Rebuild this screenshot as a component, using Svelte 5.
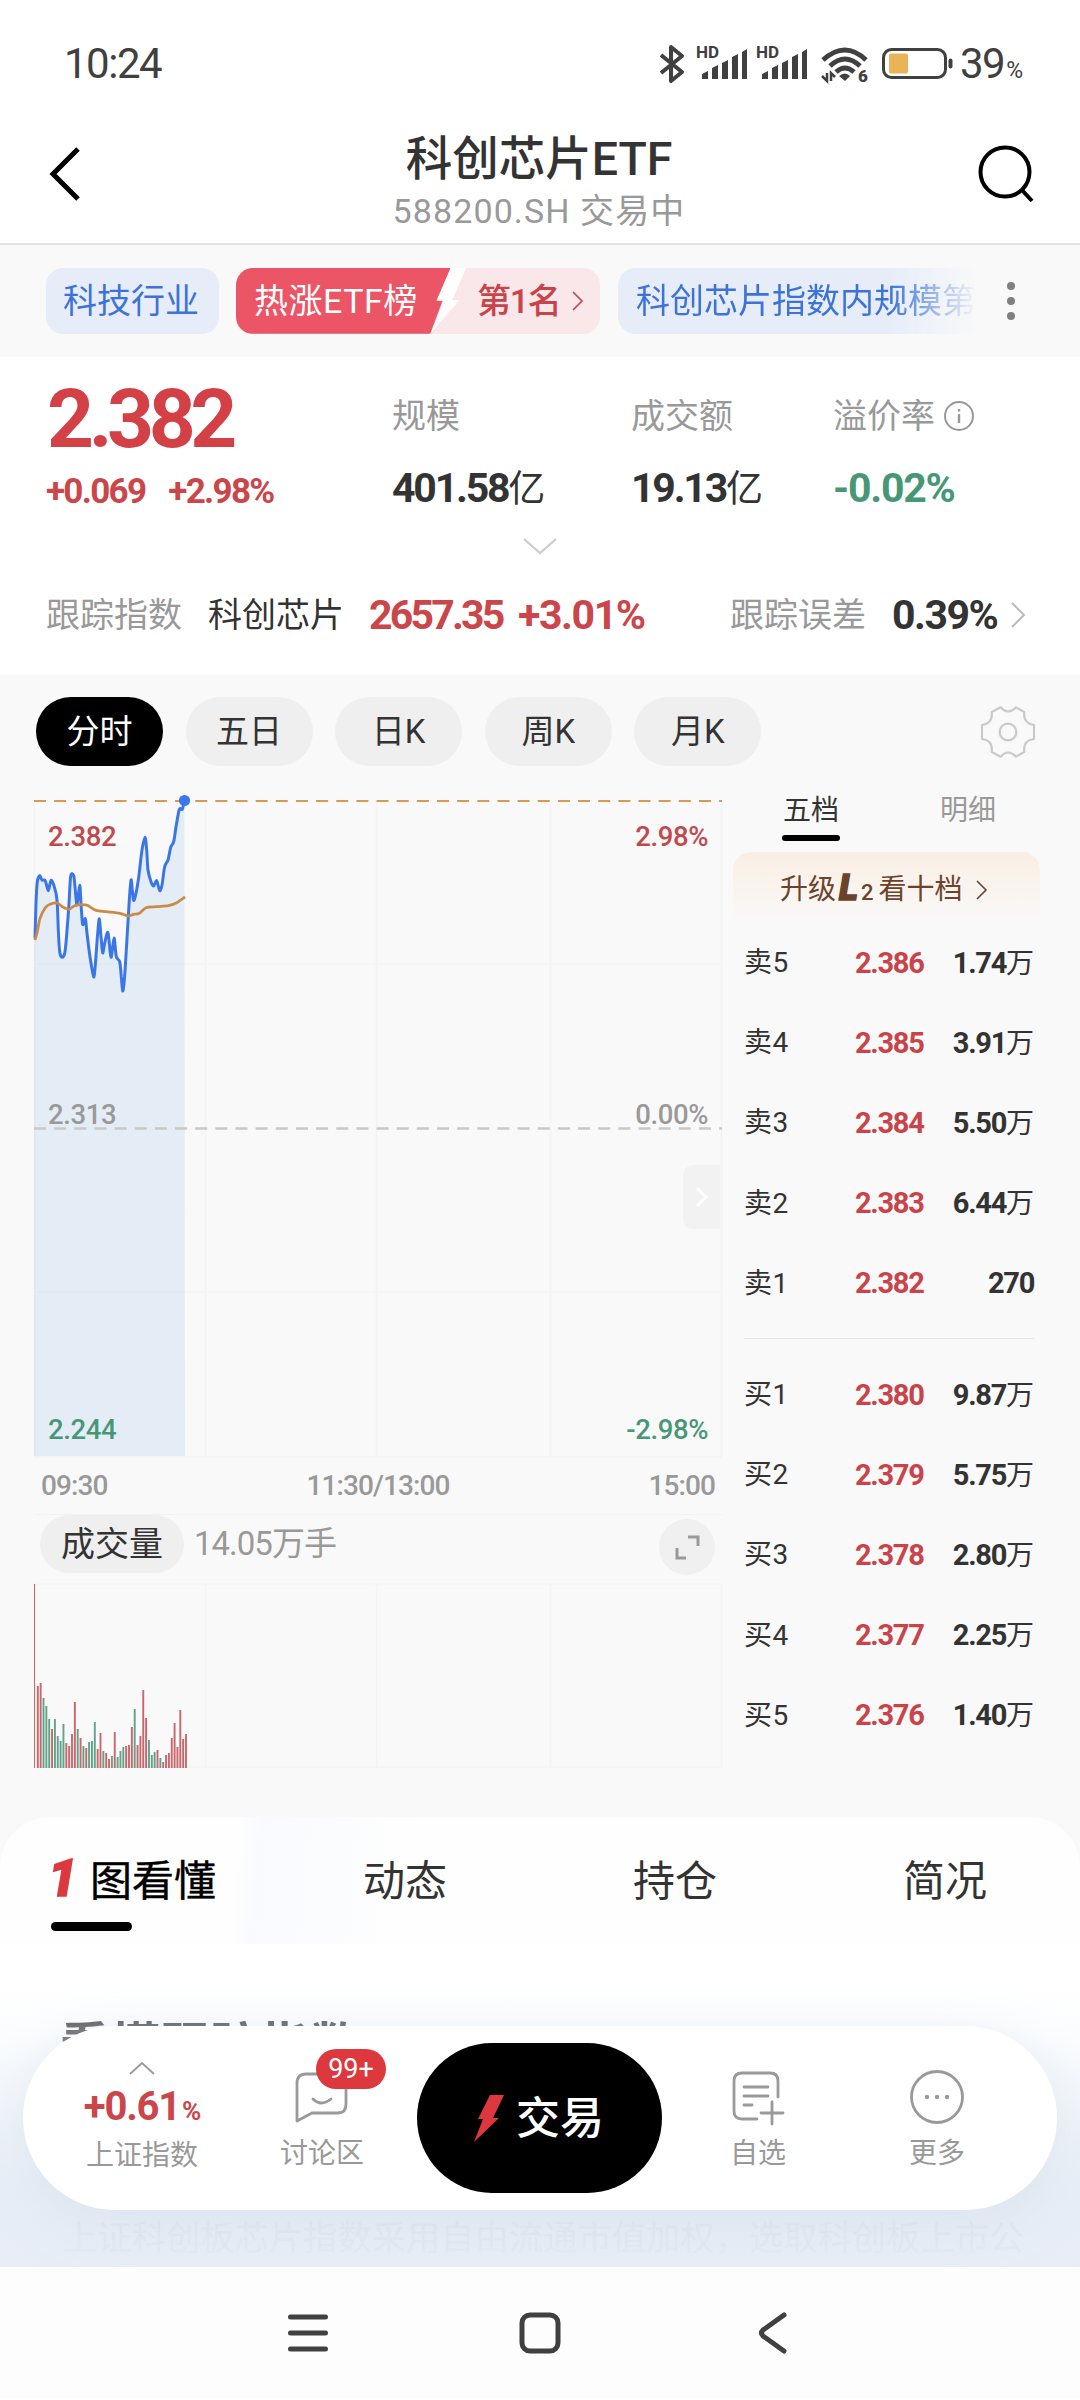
<script lang="ts">
	type Point = [number, number];

	const periods = ['分时', '五日', '日K', '周K', '月K'];
	const pages = ['图看懂', '动态', '持仓', '简况'];

	const sells = [
		{ label: '卖5', price: '2.386', amount: '1.74', unit: '万' },
		{ label: '卖4', price: '2.385', amount: '3.91', unit: '万' },
		{ label: '卖3', price: '2.384', amount: '5.50', unit: '万' },
		{ label: '卖2', price: '2.383', amount: '6.44', unit: '万' },
		{ label: '卖1', price: '2.382', amount: '270', unit: '' }
	];
	const buys = [
		{ label: '买1', price: '2.380', amount: '9.87', unit: '万' },
		{ label: '买2', price: '2.379', amount: '5.75', unit: '万' },
		{ label: '买3', price: '2.378', amount: '2.80', unit: '万' },
		{ label: '买4', price: '2.377', amount: '2.25', unit: '万' },
		{ label: '买5', price: '2.376', amount: '1.40', unit: '万' }
	];

	// price and average lines, in thirds of a pixel
	const price: Point[] = [
		[3, 415], [6, 310], [10, 245], [17, 227], [24, 240], [34, 242], [43, 272], [51, 241], [61, 260],
		[69, 300], [73, 390], [77, 455], [85, 472], [93, 455], [100, 380], [105, 310], [110, 228], [119, 227],
		[123, 260], [129, 315], [137, 256], [141, 310], [146, 373], [154, 356], [159, 400], [168, 470],
		[179, 531], [185, 480], [191, 400], [196, 356], [201, 410], [206, 459], [213, 425], [222, 398],
		[231, 472], [240, 414], [247, 470], [257, 485], [262, 530], [266, 573], [271, 540], [277, 450],
		[284, 330], [291, 241], [295, 270], [300, 301], [313, 240], [324, 150], [333, 112], [338, 150],
		[342, 210], [351, 245], [359, 258], [368, 242], [377, 272], [384, 255], [392, 200], [402, 180],
		[410, 142], [419, 125], [427, 75], [436, 28], [445, 28], [451, 2]
	];
	const average: Point[] = [
		[3, 420], [10, 395], [18, 355], [34, 323], [48, 313], [70, 309], [86, 321], [105, 328], [120, 318],
		[138, 314], [160, 316], [186, 331], [218, 335], [258, 340], [283, 348], [298, 343], [316, 340],
		[336, 323], [368, 320], [403, 317], [428, 308], [453, 291]
	];

	// volume per minute, r = up, g = down
	const volumes =
		'r184 r82 r85 g70 g62 g49 r39 g49 g32 g27 g44 r25 r22 r34 r66 g39 r30 g22 r20 g26 g27 g46 r19 r35 g17 r15 r9 g12 r36 g11 g17 g21 r22 r23 r41 g59 r23 r32 r78 r50 g28 g13 g16 r18 g10 r6 r13 r15 r30 r45 r21 r58 r29 r34'
			.split(' ')
			.map((v) => ({ up: v[0] === 'r', h: +v.slice(1) }));

	function smooth(points: Point[]) {
		const p = points.map(([x, y]) => [x / 3, y / 3]);
		let d = `M${p[0][0].toFixed(1)} ${p[0][1].toFixed(1)}`;
		for (let i = 0; i < p.length - 1; i++) {
			const a = p[i - 1] || p[i];
			const b = p[i];
			const c = p[i + 1];
			const e = p[i + 2] || c;
			const k = 7;
			d += `C${(b[0] + (c[0] - a[0]) / k).toFixed(1)} ${(b[1] + (c[1] - a[1]) / k).toFixed(1)} `;
			d += `${(c[0] - (e[0] - b[0]) / k).toFixed(1)} ${(c[1] - (e[1] - b[1]) / k).toFixed(1)} `;
			d += `${c[0].toFixed(1)} ${c[1].toFixed(1)}`;
		}
		return d;
	}

	const priceLine = smooth(price);
	const averageLine = smooth(average);
</script>

{#snippet level(row)}
	<div class="level">
		<span class="level-name">{row.label}</span>
		<b class="level-price">{row.price}</b>
		<span class="level-amount"><b>{row.amount}</b>{row.unit}</span>
	</div>
{/snippet}

{#snippet signal()}
	<svg class="signal" width="52" height="40" viewBox="0 0 52 40">
		<text x="0" y="14">HD</text>
		<path d="M6 35V30L12 27V35ZM16 35V24L22 21V35ZM26 35V19L32 16V35ZM36 35V13L42 10V35ZM46 35V8L51 5V35Z" fill="#404040" />
	</svg>
{/snippet}

<main>
	<div class="status">
		<span class="clock">10:24</span>
		<div class="status-icons">
			<svg class="bluetooth" width="26" height="40" viewBox="0 0 26 40">
				<path d="M2 11L23 28L12 37V3L23 12L2 29" fill="none" stroke="#404040" stroke-width="4" stroke-linejoin="round" />
			</svg>
			{@render signal()}
			{@render signal()}
			<svg class="wifi" width="48" height="40" viewBox="0 0 48 40">
				<g fill="none" stroke="#404040" stroke-width="5">
					<path d="M2 16Q24 -4 45 16" />
					<path d="M9 22Q24 8 39 22" />
					<path d="M15 28Q24 20 33 28" />
				</g>
				<path d="M18 32Q24 27 29 32L24 37Z" fill="#404040" />
				<path d="M1 32L6 37V29M10 37V29L14 33" fill="none" stroke="#404040" stroke-width="2.5" />
				<text x="37" y="38">6</text>
			</svg>
			<svg class="battery" width="72" height="32" viewBox="0 0 72 32">
				<rect x="1.5" y="1.5" width="62" height="28" rx="8" fill="none" stroke="#404040" stroke-width="3" />
				<rect x="7" y="5.5" width="19" height="20" rx="2" fill="#ebb357" />
				<rect x="66.5" y="10.5" width="4" height="10" rx="2" fill="#404040" />
			</svg>
			<span class="percent">39<small>%</small></span>
		</div>
	</div>

	<header>
		<svg width="40" height="60" viewBox="0 0 40 60">
			<path d="M35 5L10 30L35 55" fill="none" stroke="#000" stroke-width="5" />
		</svg>
		<div class="title">
			<h1>科创芯片ETF</h1>
			<p>588200.SH 交易中</p>
		</div>
		<svg width="60" height="60" viewBox="0 0 60 60">
			<circle cx="28" cy="28" r="24.5" fill="none" stroke="#000" stroke-width="4" />
			<path d="M45 46L55 57" stroke="#000" stroke-width="4" />
		</svg>
	</header>

	<div class="tags">
		<span class="tag first">科技行业</span>
		<span class="tag rank">
			<svg class="rank-bg" width="364" height="66" viewBox="0 0 1092 198">
				<path d="M0 0H644L602 97H620L583 197H0Z" fill="#eb5565" />
				<path d="M644 0H690L649 96H670L583 197L624 98H602Z" fill="#fff" />
			</svg>
			<span class="rank-name">热涨ETF榜</span>
			<span class="rank-place">第1名</span>
			<svg width="14" height="22" viewBox="0 0 14 22"><path d="M2 2L11 11L2 20" fill="none" stroke="#c8444a" stroke-width="1.6" /></svg>
		</span>
		<span class="tag scale">科创芯片指数内规模第一</span>
		<svg class="dots" width="10" height="40" viewBox="0 0 10 40">
			<circle cx="5" cy="5" r="4" /><circle cx="5" cy="20" r="4" /><circle cx="5" cy="35" r="4" />
		</svg>
	</div>

	<section class="quote">
		<div class="summary">
			<div class="now">
				<strong>2.382</strong>
				<div class="change"><b>+0.069</b><b>+2.98%</b></div>
			</div>
			<dl class="size"><dt>规模</dt><dd><b>401.58</b>亿</dd></dl>
			<dl class="turnover"><dt>成交额</dt><dd><b>19.13</b>亿</dd></dl>
			<dl class="premium">
				<dt>溢价率
					<svg width="32" height="32" viewBox="0 0 32 32">
						<circle cx="16" cy="16" r="14" fill="none" stroke="#999" stroke-width="2" />
						<path d="M16 14V23M16 9V11.5" stroke="#999" stroke-width="2.4" />
					</svg>
				</dt>
				<dd class="down"><b>-0.02%</b></dd>
			</dl>
		</div>
		<svg class="more-arrow" width="34" height="18" viewBox="0 0 34 18">
			<path d="M1 2L17 16L33 2" fill="none" stroke="#ccc" stroke-width="2.2" />
		</svg>
		<div class="track">
			<span class="grey">跟踪指数</span>
			<span class="index-name">科创芯片</span>
			<b class="index-value">2657.35</b>
			<b class="index-change">+3.01%</b>
			<span class="grey error-name">跟踪误差</span>
			<b class="error-value">0.39%</b>
			<svg width="16" height="26" viewBox="0 0 16 26"><path d="M2 1L14 13L2 25" fill="none" stroke="#bbb" stroke-width="2" /></svg>
		</div>
	</section>

	<section class="market">
		<nav class="periods">
			{#each periods as period, i}
				<button class:active={i === 0}>{period}</button>
			{/each}
			<svg class="gear" width="60" height="60" viewBox="22 34 180 180">
				<path d="M90 50Q112 75 136 50L161 64Q156 98 190 103V145Q156 150 161 184L136 198Q112 173 90 198L63 184Q68 150 34 145V103Q68 98 63 64Z" />
				<circle cx="112" cy="124" r="25" />
			</svg>
		</nav>

		<div class="columns">
			<div class="charts">
				<div class="chart">
					<svg width="688" height="668" viewBox="0 -10 688 668">
						<path d="M0.5 0V656M171.5 0V656M342.5 0V656M516.5 0V656M687.5 0V656M0 164H688M0 492H688M0 657H688" stroke="#f3f4f5" stroke-width="1.5" />
						<path d={`${priceLine}L151 656H0V138Z`} fill="#3c86e6" fill-opacity=".11" />
						<path d="M0 1H688" stroke="#d69a50" stroke-width="1.8" stroke-dasharray="12 8.15" />
						<path d="M0 328.500H688" stroke="#c8c8c8" stroke-width="2.6" stroke-dasharray="12 8.15" />
						<path d={priceLine} fill="none" stroke="#3b76e6" stroke-width="3" stroke-linejoin="round" />
						<path d={averageLine} fill="none" stroke="#cc8a48" stroke-width="2.8" />
						<circle cx="150.5" cy="0.5" r="5.6" fill="#3b78f0" />
					</svg>
					<div class="scale-row top up"><span>2.382</span><span>2.98%</span></div>
					<div class="scale-row middle"><span>2.313</span><span>0.00%</span></div>
					<div class="scale-row bottom down"><span>2.244</span><span>-2.98%</span></div>
					<div class="drawer">
						<svg width="14" height="22" viewBox="0 0 14 22"><path d="M2 2L11 11L2 20" fill="none" stroke="#fff" stroke-width="3" /></svg>
					</div>
				</div>
				<div class="hours"><span>09:30</span><span>11:30/13:00</span><span>15:00</span></div>
				<div class="volume-head">
					<span class="volume-name">成交量</span>
					<span class="volume-total">14.05万手</span>
					<span class="expand">
						<svg width="28" height="28" viewBox="0 0 28 28"><path d="M15 4H25V13M4 15V25H13" fill="none" stroke="#999" stroke-width="3" /></svg>
					</span>
				</div>
				<svg class="volume" width="688" height="186" viewBox="0 0 688 186">
					<path d="M171.5 0V184M342.5 0V184M516.5 0V184M687.5 0V184M0 1H688M0 184H688" stroke="#f3f4f5" stroke-width="1.2" />
					{#each volumes as bar, i}
						<rect x={i * 2.85} y={185 - bar.h} width={i ? 1.9 : 1} height={bar.h} fill={bar.up ? '#c9686c' : '#5fa38b'} />
					{/each}
				</svg>
			</div>

			<aside>
				<div class="book-tabs"><span class="on">五档</span><span>明细</span></div>
				<div class="upgrade">
					升级<i>L</i><em>2</em>看十档
					<svg width="14" height="20" viewBox="0 0 14 20"><path d="M2 1L11 10L2 19" fill="none" stroke="#6b432a" stroke-width="1.6" /></svg>
				</div>
				{#each sells as row}{@render level(row)}{/each}
				<hr />
				{#each buys as row}{@render level(row)}{/each}
			</aside>
		</div>
	</section>

	<section class="sheet">
		<nav class="pages">
			{#each pages as page, i}
				<span class="page" class:current={i === 0}>{#if i === 0}<i>1</i>{/if}{page}</span>
			{/each}
		</nav>
		<div class="content">
			<h2>看懂跟踪指数</h2>
			<p>上证科创板芯片指数采用自由流通市值加权，选取科创板上市公</p>
			<div class="veil"></div>
			<div class="dock">
				<div class="item market-index">
					<svg width="28" height="16" viewBox="0 0 28 16"><path d="M2 14L14 3L26 14" fill="none" stroke="#999" stroke-width="1.8" /></svg>
					<b>+0.61<small>%</small></b>
					<span>上证指数</span>
				</div>
				<div class="item talk">
					<svg width="56" height="56" viewBox="0 0 56 56" fill="none" stroke="#999" stroke-width="2.8" stroke-linejoin="round" stroke-linecap="round">
						<path d="M3 51V13Q3 4 12 4H44Q52 4 52 12V34Q52 43 44 43H18Z" />
						<path d="M19 29Q27 37 37 29" />
					</svg>
					<span>讨论区</span>
					<div class="badge">99+</div>
				</div>
				<button class="trade">
					<svg width="32" height="50" viewBox="0 0 32 50"><path d="M17 1H31L20 24H26L1 48L10 25H5Z" fill="#dc383e" /></svg>
					交易
				</button>
				<div class="item favourite">
					<svg width="56" height="56" viewBox="0 0 56 56" fill="none" stroke="#999" stroke-width="2.8" stroke-linecap="round">
						<path d="M27 49H12Q4 49 4 41V11Q4 3 12 3H40Q48 3 48 11V27" />
						<path d="M14 17H38M14 26H38M14 35H22M42 32V54M31 43H53" />
					</svg>
					<span>自选</span>
				</div>
				<div class="item others">
					<svg width="56" height="56" viewBox="0 0 56 56">
						<circle cx="28" cy="27" r="25.5" fill="none" stroke="#999" stroke-width="2.8" />
						<g fill="#999"><circle cx="18" cy="27" r="2.2" /><circle cx="28" cy="27" r="2.2" /><circle cx="38" cy="27" r="2.2" /></g>
					</svg>
					<span>更多</span>
				</div>
			</div>
		</div>
	</section>

	<footer>
		<svg width="44" height="44" viewBox="0 0 44 44"><path d="M4.500 6H39.500M4.500 22H39.500M4.500 38H39.500" stroke="#404040" stroke-width="5" stroke-linecap="round" /></svg>
		<svg width="44" height="44" viewBox="0 0 44 44"><rect x="4" y="4" width="36" height="36" rx="8" fill="none" stroke="#404040" stroke-width="5" /></svg>
		<svg width="44" height="44" viewBox="0 0 44 44"><path d="M34 4L13 19Q10 22 13 25L34 40" fill="none" stroke="#404040" stroke-width="5" stroke-linecap="round" /></svg>
	</footer>
</main>

<style>
	:global(body) {
		background: #fff;
	}

	main {
		width: 1080px;
		height: 2400px;
		overflow: hidden;
		background: #fff;
		color: #333;
		font-family: Roboto, "Noto Sans CJK SC", sans-serif;
		font-size: 34px;
		line-height: 1;
	}

	svg {
		display: block;
		flex: none;
		overflow: visible;
	}

	b {
		font-weight: 700;
	}

	span, b, strong {
		white-space: nowrap;
	}

	.status {
		height: 128px;
		box-sizing: border-box;
		padding: 0 54px 0 64px;
		display: flex;
		justify-content: space-between;
		align-items: center;
		color: #404040;
	}

	.clock {
		font-size: 42px;
		letter-spacing: -1.5px;
	}

	.status-icons {
		display: flex;
		align-items: center;
	}

	.bluetooth {
		margin-right: 11px;
	}

	.signal {
		margin-right: 8px;
	}

	.signal text {
		font-size: 17px;
		font-weight: 700;
		fill: #404040;
	}

	.wifi {
		margin: 0 13px 0 5px;
	}

	.wifi text {
		font-size: 17px;
		font-weight: 900;
		fill: #404040;
	}

	.percent {
		width: 66px;
		margin-left: 6px;
		font-size: 42px;
		letter-spacing: -1.5px;
	}

	.percent small {
		margin-left: 2px;
		font-size: 23px;
		letter-spacing: 0;
	}

	header {
		height: 115px;
		padding: 0 43px;
		display: flex;
		justify-content: space-between;
		border-bottom: 2px solid #e2e2e2;
	}

	header > svg {
		margin-top: 16px;
	}

	.title {
		margin-left: 18px;
		text-align: center;
	}

	h1 {
		margin: 6px 0 0;
		font-size: 46.500px;
		line-height: 50px;
		font-weight: 500;
	}

	.title p {
		margin: 7px 0 0;
		font-size: 34px;
		line-height: 40px;
		letter-spacing: 1.1px;
		color: #999;
	}

	.tags {
		height: 112px;
		padding: 0 64px 0 46px;
		box-sizing: border-box;
		display: flex;
		align-items: center;
		background: #f9f9f9;
	}

	.tag {
		height: 66px;
		line-height: 67px;
		border-radius: 17px;
		box-sizing: border-box;
		overflow: hidden;
		flex: none;
		color: #3d73d9;
		background: #e6edf8;
	}

	.first {
		width: 173px;
		padding-left: 17px;
	}

	.rank {
		position: relative;
		display: flex;
		align-items: center;
		width: 364px;
		margin: 0 18px 0 17px;
		background: #fae7e9;
		color: #c8444a;
	}

	.rank-bg {
		position: absolute;
		left: 0;
		top: 0;
	}

	.rank-name {
		position: relative;
		width: 223px;
		padding-left: 18px;
		box-sizing: border-box;
		color: #fff;
		letter-spacing: .5px;
	}

	.rank-place {
		width: 94px;
		padding-left: 18px;
		letter-spacing: -1.3px;
		font-weight: 500;
	}

	.scale {
		width: 367px;
		padding-left: 18px;
		mask-image: linear-gradient(to right, #000 74%, transparent 98%);
	}

	.dots {
		margin-left: 21px;
		fill: #808080;
	}

	.quote {
		height: 317px;
		padding-left: 46px;
	}

	.summary {
		display: flex;
		height: 180px;
	}

	.now {
		width: 346px;
		color: #d34146;
	}

	.now strong {
		display: block;
		padding: 21px 0 0 1px;
		font-size: 82px;
		line-height: 82px;
		letter-spacing: -5.4px;
	}

	.change {
		display: flex;
		gap: 23px;
		margin-top: 12px;
		font-size: 35px;
		line-height: 40px;
		letter-spacing: -1.7px;
		color: #cb464a;
	}

	dl {
		margin: 0;
	}

	dt {
		display: flex;
		gap: 8px;
		align-items: center;
		margin-top: 41px;
		height: 36px;
		line-height: 36px;
		color: #999;
	}

	dd {
		margin: 31px 0 0;
		font-size: 37px;
		line-height: 46px;
	}

	dd b {
		font-size: 41px;
		letter-spacing: -2.2px;
	}

	.size {
		width: 239px;
	}

	.turnover {
		width: 202px;
	}

	.premium b {
		letter-spacing: -1.2px;
	}

	.up {
		color: #c1494e;
	}

	.down {
		color: #479777;
	}

	.more-arrow {
		margin-left: 477px;
	}

	.track {
		display: flex;
		align-items: center;
		height: 50px;
		margin-top: 35px;
	}

	.track b {
		font-size: 41px;
		letter-spacing: -2px;
	}

	.grey {
		color: #999;
	}

	.index-name {
		margin-left: 26px;
	}

	.index-value, .index-change {
		color: #cb464a;
	}

	.track .index-value {
		width: 149px;
		margin-left: 25px;
		letter-spacing: -2.8px;
	}

	.track .index-change {
		letter-spacing: -1.4px;
	}

	.error-name {
		margin-left: auto;
	}

	.track .error-value {
		width: 118px;
		margin-left: 26px;
		letter-spacing: -1.5px;
	}

	.track svg {
		margin-right: 54px;
	}

	.market {
		height: 1143px;
		background: #f9f9f9;
	}

	.periods {
		height: 115px;
		padding: 0 42px 0 36px;
		display: flex;
		align-items: center;
		gap: 22.600px;
	}

	.periods button {
		width: 127px;
		height: 69px;
		padding: 0;
		border: 0;
		border-radius: 35px;
		background: #efefef;
		color: #333;
		font: 400 33px/70px Roboto, "Noto Sans CJK SC", sans-serif;
	}

	.periods .active {
		background: #000;
		color: #fff;
	}

	.gear {
		margin-left: auto;
		fill: none;
		stroke: #c9c9c9;
		stroke-width: 6.5;
		stroke-linejoin: round;
	}

	.columns {
		display: flex;
		margin-top: 1px;
		padding-left: 34px;
	}

	.charts {
		width: 688px;
	}

	.chart {
		position: relative;
		height: 668px;
	}

	.scale-row {
		position: absolute;
		left: 14px;
		right: 14px;
		display: flex;
		justify-content: space-between;
		font-size: 27.500px;
		line-height: 30px;
		font-weight: 500;
		letter-spacing: -.4px;
	}

	.top {
		top: 32px;
	}

	.middle {
		top: 310px;
		color: #999;
	}

	.bottom {
		top: 625px;
	}

	.drawer {
		position: absolute;
		right: 2px;
		top: 375px;
		width: 37px;
		height: 64px;
		border-radius: 10px 0 0 10px;
		background: #f2f2f2;
		display: flex;
		align-items: center;
		justify-content: center;
	}

	.hours {
		display: flex;
		justify-content: space-between;
		height: 56px;
		line-height: 56px;
		padding: 0 7px;
		font-size: 28px;
		font-weight: 500;
		letter-spacing: -.9px;
		color: #999;
	}

	.volume-head {
		display: flex;
		align-items: center;
		height: 68px;
		border-top: 1px solid #f2f3f4;
		padding: 0 7px 0 6px;
	}

	.volume-name {
		width: 144px;
		height: 58px;
		margin-top: -10px;
		border-radius: 29px;
		line-height: 59px;
		text-align: center;
		background: #efefef;
	}

	.volume-total {
		margin: -12px auto 0 10px;
		font-size: 33px;
		letter-spacing: -1px;
		color: #999;
	}

	.expand {
		width: 56px;
		height: 56px;
		margin-top: -5px;
		border-radius: 50%;
		background: #f0f0f0;
		display: grid;
		place-items: center;
	}

	aside {
		width: 307px;
		margin-left: 11px;
	}

	.book-tabs {
		display: flex;
		height: 62px;
		color: #999;
	}

	.book-tabs span {
		width: 56px;
		margin: 4px 0 0 99px;
		font-size: 28px;
		line-height: 33px;
		height: 41px;
	}

	.book-tabs .on {
		position: relative;
		width: 58px;
		margin-left: 50px;
		color: #333;
		height: 41px;
	}

	.book-tabs .on::after {
		content: "";
		position: absolute;
		left: -1px;
		bottom: -6px;
		width: 58px;
		height: 6px;
		border-radius: 3px;
		background: #000;
	}

	.upgrade {
		height: 70px;
		box-sizing: border-box;
		border-radius: 18px 18px 0 0;
		background: linear-gradient(#faeee3, #f9f9f9);
		display: flex;
		align-items: center;
		padding: 6px 0 0 47px;
		font-size: 28px;
		color: #6b432a;
	}

	.upgrade i {
		margin: -4px 0 0 3px;
		font-size: 36px;
		font-weight: 900;
		-webkit-text-stroke: 1.5px #6b432a;
	}

	.upgrade em {
		margin: 5px 5px 0 3px;
		font-size: 22px;
		font-style: normal;
		font-weight: 500;
	}

	.upgrade svg {
		margin-left: 13px;
	}

	.level {
		display: flex;
		align-items: center;
		height: 80.200px;
		padding: 0 6px 0 11px;
		font-size: 28px;
		position: relative;
		top: 1px;
	}

	.level-name {
		width: 111px;
		letter-spacing: .5px;
	}

	.level b {
		font-size: 29px;
		letter-spacing: -1.3px;
	}

	.level-price {
		color: #c8444a;
	}

	.level-amount {
		margin-left: auto;
	}

	hr {
		height: 1px;
		margin: 15px 6px 15px 11px;
		border: 0;
		background: #e6e6e6;
	}

	.sheet {
		position: relative;
		height: 450px;
		background: #f9f9f9;
	}

	.pages {
		display: flex;
		height: 127px;
		border-radius: 50px 50px 0 0;
		background: linear-gradient(95deg, transparent 22%, #f9fafe 24%, #fbfcfe 30%, transparent 38%), #fefefe;
	}

	.page {
		width: 270px;
		text-align: center;
		font-size: 42px;
		line-height: 129px;
	}

	.current {
		position: relative;
		box-sizing: border-box;
		padding-left: 51px;
		text-align: left;
		color: #000;
		-webkit-text-stroke: .4px #000;
	}

	.current i {
		display: inline-block;
		width: 39px;
		text-indent: -3px;
		font-size: 52px;
		line-height: 1;
		font-weight: 900;
		color: #dc383e;
		-webkit-text-stroke: 1.5px #dc383e;
	}

	.current::after {
		content: "";
		position: absolute;
		left: 51px;
		top: 105px;
		width: 81px;
		height: 9px;
		border-radius: 5px;
		background: #000;
	}

	.content {
		position: relative;
		height: 323px;
		overflow: hidden;
		background: #fff;
	}

	h2 {
		margin: 0;
		padding: 78px 0 0 60px;
		font-size: 50px;
		line-height: 50px;
		font-weight: 700;
		color: #333;
	}

	.content p {
		margin: 146px 0 0 63px;
		font-size: 34.300px;
		line-height: 40px;
		white-space: nowrap;
		color: #666;
	}

	/* fades the page out under the floating bar */
	.veil {
		position: absolute;
		inset: 40px 0 0;
		background: linear-gradient(rgba(250, 252, 255, 0), rgba(243, 247, 252, .3) 16%, rgba(230, 237, 246, .94) 70%, rgba(231, 236, 246, .98));
	}

	.dock {
		position: absolute;
		left: 23px;
		top: 82px;
		width: 1034px;
		height: 184px;
		border-radius: 92px;
		background: #fff;
		box-shadow: 0 10px 50px rgba(200, 214, 228, .4);
		display: flex;
	}

	.item {
		position: relative;
		display: flex;
		flex-direction: column;
		align-items: center;
		font-size: 28px;
		color: #999;
	}

	.item > svg {
		margin-top: 44px;
	}

	.item > span {
		margin-top: 14px;
	}

	.market-index {
		width: 168px;
		margin-left: 35px;
	}

	.market-index > svg {
		margin-top: 34px;
	}

	.market-index b {
		margin-top: 11px;
		font-size: 40px;
		line-height: 40px;
		letter-spacing: -1.2px;
		color: #cb464a;
	}

	.market-index small {
		font-size: 26px;
		margin-left: 2px;
	}

	.item.market-index > span {
		margin-top: 11px;
	}

	.talk {
		width: 120px;
		margin-left: 36px;
	}

	.badge {
		position: absolute;
		left: 54px;
		top: 23px;
		width: 70px;
		height: 40px;
		border-radius: 20px;
		background: #dc383e;
		color: #fff;
		font-size: 27px;
		line-height: 41px;
		text-align: center;
	}

	.trade {
		width: 245px;
		height: 150px;
		margin: 17px 0 0 35px;
		padding: 2px 2px 0 0;
		border: 0;
		border-radius: 75px;
		background: #000;
		color: #fff;
		display: flex;
		align-items: center;
		justify-content: center;
		gap: 11px;
		font: 500 44px/1 Roboto, "Noto Sans CJK SC", sans-serif;
	}

	.favourite {
		width: 120px;
		margin-left: 36px;
	}

	.others {
		width: 120px;
		margin-left: 59px;
	}

	footer {
		display: flex;
		justify-content: center;
		gap: 188px;
		height: 132px;
		padding-right: 1px;
		align-items: center;
		background: #fdfdfd;
	}
</style>
